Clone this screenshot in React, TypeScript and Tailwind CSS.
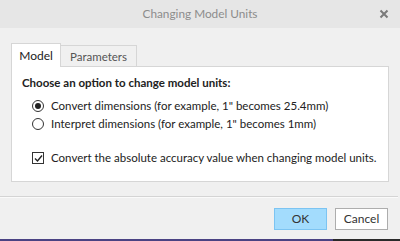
import React, { useState } from "react";

const FONT = { fontFamily: 'Lato, "Noto Sans", sans-serif' };

function Radio({ checked, label, onSelect }: { checked: boolean; label: string; onSelect: () => void }) {
  return (
    <label className="flex items-center h-[18px] cursor-default whitespace-nowrap" onClick={onSelect}>
      <span className="w-[12px] h-[12px] rounded-full border border-[#333] bg-white flex items-center justify-center">
        {checked && <span className="w-[6px] h-[6px] rounded-full bg-[#222]" />}
      </span>
      <span className="ml-[7px]">{label}</span>
    </label>
  );
}

export default function App() {
  const [mode, setMode] = useState<"convert" | "interpret">("convert");
  const [accuracy, setAccuracy] = useState(true);

  return (
    <div
      className="w-[400px] h-[241px] bg-[#f0f0f0] flex flex-col text-[11.5px] text-[#222] overflow-hidden"
      style={FONT}
    >
      {/* title bar */}
      <div className="h-[28px] bg-[#e6e6e6] grid grid-cols-[40px_1fr_40px] items-center shrink-0">
        <div />
        <div className="text-center text-[11.8px] text-[#8c8c8c]">Changing Model Units</div>
        <div className="flex justify-end pr-[11px]">
          <svg width="10" height="10" viewBox="0 0 10 10">
            <path d="M1.5 1.5 L8.5 8.5 M8.5 1.5 L1.5 8.5" stroke="#7a7a7a" strokeWidth="2" />
          </svg>
        </div>
      </div>

      <div className="flex flex-col px-[11px] pt-[15px]">
        {/* tabs */}
        <div className="flex items-end h-[24px]">
          <div className="w-[50px] h-[24px] bg-white border border-b-0 border-[#d6d6d6] flex items-center justify-center relative z-10 text-[12px]">
            Model
          </div>
          <div className="w-[76px] h-[22px] bg-[#f0f0f0] border border-l-0 border-b-0 border-[#d6d6d6] flex items-center justify-center text-[11.5px] text-[#555]">
            Parameters
          </div>
        </div>
        {/* panel */}
        <div className="h-[116px] bg-white border border-[#d6d6d6] -mt-px px-[10px] pt-[8px]">
          <div className="font-bold h-[16px] leading-[16px] whitespace-nowrap">Choose an option to change model units:</div>
          <div className="flex flex-col pl-[10px] mt-[6px]">
            <Radio
              checked={mode === "convert"}
              label={'Convert dimensions (for example, 1" becomes 25.4mm)'}
              onSelect={() => setMode("convert")}
            />
            <Radio
              checked={mode === "interpret"}
              label={'Interpret dimensions (for example, 1" becomes 1mm)'}
              onSelect={() => setMode("interpret")}
            />
            <label
              className="flex items-center h-[18px] mt-[16px] whitespace-nowrap"
              onClick={() => setAccuracy(!accuracy)}
            >
              <span className="w-[12px] h-[12px] border border-[#333] bg-white flex items-center justify-center">
                {accuracy && (
                  <svg width="9" height="9" viewBox="0 0 9 9">
                    <path d="M1 4.5 L3.5 7 L8 1.5" stroke="#222" strokeWidth="1.4" fill="none" />
                  </svg>
                )}
              </span>
              <span className="ml-[7px]">Convert the absolute accuracy value when changing model units.</span>
            </label>
          </div>
        </div>
      </div>

      {/* separator */}
      <div className="mt-[14px] h-[2px] border-t border-[#d4d4d4] border-b border-b-[#fafafa] mr-[2px]" />

      {/* buttons */}
      <div className="flex justify-end gap-[8px] pr-[12px] mt-[10px]">
        <button className="w-[53px] h-[22px] bg-[#a3dcfd] border border-[#7cc4f2] text-[12px] text-[#333]">
          OK
        </button>
        <button className="w-[53px] h-[22px] bg-white border border-[#adadad] text-[12px] text-[#333]">
          Cancel
        </button>
      </div>

      <div className="flex-1" />
      <div className="h-[2px] flex shrink-0">
        <div className="w-[333px] bg-[#4a4283]" />
        <div className="flex-1 bg-[#2a2a2a]" />
      </div>
    </div>
  );
}
